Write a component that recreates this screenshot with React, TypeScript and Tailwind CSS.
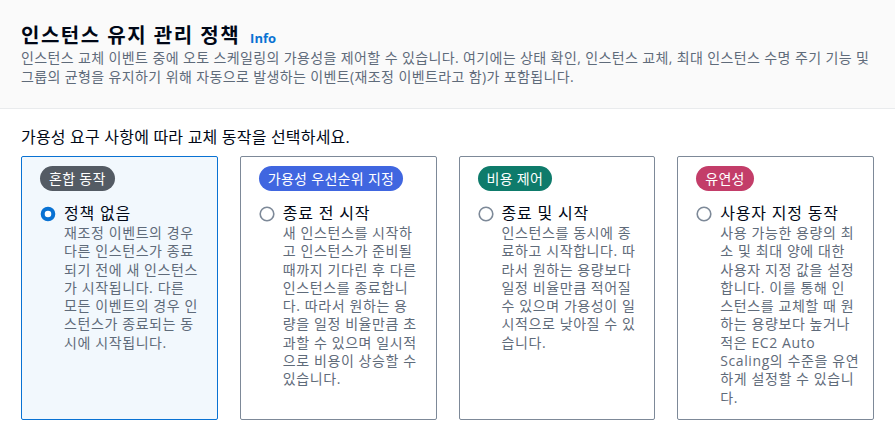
const FONT = {
  fontFamily: '"Open Sans", "Noto Sans CJK KR", sans-serif',
};

type Option = {
  badge: string;
  badgeClass: string;
  label: string;
  lines: string[];
  selected?: boolean;
};

// line breaks follow the reference rendering
const OPTIONS: Option[] = [
  {
    badge: "혼합 동작",
    badgeClass: "bg-[#545b64]",
    label: "정책 없음",
    lines: [
      "재조정 이벤트의 경우",
      "다른 인스턴스가 종료",
      "되기 전에 새 인스턴스",
      "가 시작됩니다. 다른",
      "모든 이벤트의 경우 인",
      "스턴스가 종료되는 동",
      "시에 시작됩니다.",
    ],
    selected: true,
  },
  {
    badge: "가용성 우선순위 지정",
    badgeClass: "bg-[#4066e0]",
    label: "종료 전 시작",
    lines: [
      "새 인스턴스를 시작하",
      "고 인스턴스가 준비될",
      "때까지 기다린 후 다른",
      "인스턴스를 종료합니",
      "다. 따라서 원하는 용",
      "량을 일정 비율만큼 초",
      "과할 수 있으며 일시적",
      "으로 비용이 상승할 수",
      "있습니다.",
    ],
  },
  {
    badge: "비용 제어",
    badgeClass: "bg-[#0e7b6b]",
    label: "종료 및 시작",
    lines: [
      "인스턴스를 동시에 종",
      "료하고 시작합니다. 따",
      "라서 원하는 용량보다",
      "일정 비율만큼 적어질",
      "수 있으며 가용성이 일",
      "시적으로 낮아질 수 있",
      "습니다.",
    ],
  },
  {
    badge: "유연성",
    badgeClass: "bg-[#c33d69]",
    label: "사용자 지정 동작",
    lines: [
      "사용 가능한 용량의 최",
      "소 및 최대 양에 대한",
      "사용자 지정 값을 설정",
      "합니다. 이를 통해 인",
      "스턴스를 교체할 때 원",
      "하는 용량보다 높거나",
      "적은 EC2 Auto",
      "Scaling의 수준을 유연",
      "하게 설정할 수 있습니",
      "다.",
    ],
  },
];

function Radio({ checked }: { checked?: boolean }) {
  return (
    <svg width="16" height="16" viewBox="0 0 16 16" className="shrink-0">
      {checked ? (
        <circle cx="8" cy="8" r="5.3" fill="#fff" stroke="#0972d3" strokeWidth="4" />
      ) : (
        <circle cx="8" cy="8" r="6.8" fill="#fff" stroke="#7d8998" strokeWidth="1.6" />
      )}
    </svg>
  );
}

function OptionCard({ opt }: { opt: Option }) {
  return (
    <div
      className={
        opt.selected
          ? "rounded-[2px] border border-[#0972d3] bg-[#f2f8fd] px-[18px] pt-[9px] pb-[12px]"
          : "rounded-[2px] border border-[#7d8998] bg-white px-[18px] pt-[9px] pb-[12px]"
      }
    >
      <span
        className={`inline-block h-[25px] rounded-full px-[9px] text-[14px] leading-[25px] tracking-[0.3px] text-white ${opt.badgeClass}`}
      >
        {opt.badge}
      </span>
      <div className="mt-[12px] flex gap-[8px]">
        <div className="pt-[3px]">
          <Radio checked={opt.selected} />
        </div>
        <div>
          <div className="text-[16px] leading-[20px] tracking-[0.8px] text-[#000716]">{opt.label}</div>
          <p className="mt-[1px] whitespace-nowrap text-[14px] leading-[18.3px] tracking-[0.6px] text-[#5f6b7a]">
            {opt.lines.map((l, i) => (
              <span key={i} className="block">
                {l}
              </span>
            ))}
          </p>
        </div>
      </div>
    </div>
  );
}

export default function App() {
  return (
    <div className="min-h-[437px] w-[895px] bg-white" style={FONT}>
      <header className="border-b border-[#e9ebed] bg-[#fafafa] px-[21px] pt-[29px] pb-[22px]">
        <h1 className="flex items-baseline gap-[10px] text-[20px] font-bold leading-[14px] text-[#000716]">
          <span className="tracking-[1.5px]">인스턴스 유지 관리 정책</span>
          <a className="text-[13px] font-bold leading-[14px] text-[#0972d3]">Info</a>
        </h1>
        <p className="mt-[4px] whitespace-nowrap text-[14px] leading-[18.5px] tracking-[0.38px] text-[#5f6b7a]">
          <span className="block">
            인스턴스 교체 이벤트 중에 오토 스케일링의 가용성을 제어할 수 있습니다. 여기에는 상태 확인, 인스턴스 교체, 최대 인스턴스 수명 주기 기능 및
          </span>
          <span className="block">
            그룹의 균형을 유지하기 위해 자동으로 발생하는 이벤트(재조정 이벤트라고 함)가 포함됩니다.
          </span>
        </p>
      </header>
      <section className="px-[21px] pt-[17px] pb-5">
        <p className="text-[16px] leading-[22px] tracking-[0.2px] text-[#000716]">
          가용성 요구 사항에 따라 교체 동작을 선택하세요.
        </p>
        <div className="mt-[8px] grid grid-cols-4 gap-[22px]">
          {OPTIONS.map((opt) => (
            <OptionCard key={opt.label} opt={opt} />
          ))}
        </div>
      </section>
    </div>
  );
}
